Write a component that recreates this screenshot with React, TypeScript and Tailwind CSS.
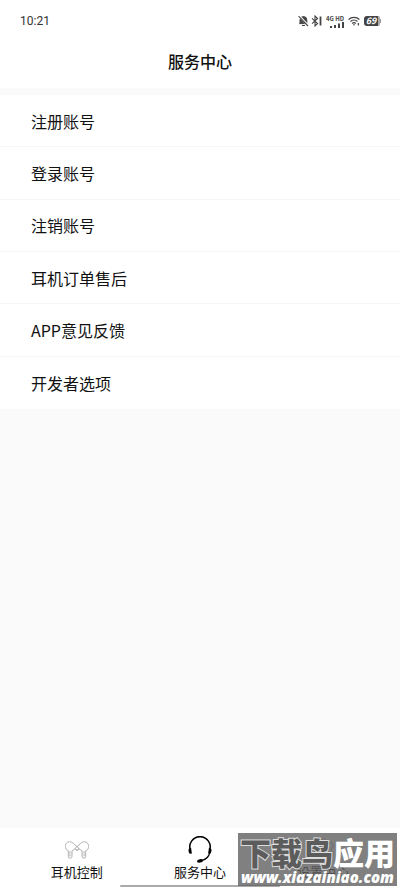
import React from "react";

const services = ["注册账号", "登录账号", "注销账号", "耳机订单售后", "APP意见反馈", "开发者选项"];

function StatusIcons() {
  return (
    <div className="flex items-center text-[#444]" aria-label="手机状态">
      <svg className="mr-[2px] h-3 w-[11px]" viewBox="0 0 11 12" fill="none" stroke="currentColor">
        <path d="M2 8.6V5a3.4 3.4 0 0 1 6.8 0v3.6H1.3M4 10.5h3" fill="currentColor" />
        <path d="M1 .8 10.5 11" stroke="white" strokeWidth="2.2" />
        <path d="M.6 1.2 10 11" strokeWidth="1.1" />
      </svg>
      <svg className="mr-1 h-3 w-[11px]" viewBox="0 0 11 12" fill="none" stroke="currentColor" strokeWidth="1.1">
        <path d="m1 3.3 5.6 5.2L4 11V1l2.6 2.5L1 8.7" />
        <path d="M9.5 1.5v9" strokeWidth="1.8" />
      </svg>
      <div className="mr-1 flex w-[18px] flex-col items-center">
        <span className="whitespace-nowrap text-[6px] leading-[7px] font-bold">4G HD</span>
        <svg className="h-[6px] w-[14px] self-end" viewBox="0 0 14 6" fill="currentColor">
          <path d="M0 4h2v2H0zM4 3h2v3H4zM8 1.5h2V6H8zM12 0h2v6h-2z" />
        </svg>
      </div>
      <svg className="mr-1 h-[10px] w-3" viewBox="0 0 12 10" fill="none" stroke="currentColor" strokeWidth="1.3">
        <path d="M.6 3.5a8 8 0 0 1 10.8 0M2.5 5.5a5.2 5.2 0 0 1 7 0M4.2 7.4a2.7 2.7 0 0 1 3.6 0" />
        <circle cx="6" cy="8.8" r=".8" fill="currentColor" stroke="none" />
        <path d="M10.4 7v2.5" />
      </svg>
      <div className="flex items-center">
        <span className="flex h-[10px] w-[14px] items-center justify-center rounded-l-[3px] bg-[#444] text-[9px] font-bold italic text-white">69</span>
        <span className="h-[10px] w-[2px] rounded-r-[2px] bg-[#aaa]" />
        <span className="h-1 w-px bg-[#999]" />
      </div>
    </div>
  );
}

function EarbudsIcon() {
  return (
    <svg className="h-[18px] w-6" viewBox="0 0 24 18" fill="none" stroke="#b0b0b0" strokeWidth="1">
      <path d="M3.300 9.700A4.600 4.600 0 1 1 8.300 2.400L14.200 7.600 12 9.500 9.800 7.800 7 10v5.300a1.850 1.850 0 0 1-3.700 0Z" />
      <path d="M20.700 9.700A4.600 4.600 0 1 0 15.700 2.400L9.800 7.600 12 9.500l2.200-1.700L17 10v5.300a1.850 1.850 0 0 0 3.700 0Z" />
      <path d="M4.500 10.500h1.400v4.500H4.500zM18.100 10.500h1.400v4.500h-1.400z" strokeWidth=".5" />
    </svg>
  );
}

function HeadsetIcon() {
  return (
    <svg className="h-[27px] w-6" viewBox="0 0 24 27" fill="none" stroke="black">
      <path d="M2.300 14A10.200 10.200 0 1 1 21.700 14" strokeWidth="1.500" />
      <path d="M21.800 16.500c-1 4.500-4 7.200-8.300 8" strokeWidth="1.200" />
      <path d="M3 11.500.7 12.900c-.5 2 .1 4 1.200 4.900l2-.2ZM21 11.500l2.300 1.400c.5 2-.1 4-1.200 4.900l-2-.2Z" fill="black" stroke="none" />
      <ellipse cx="12" cy="24.900" rx="3" ry="1.700" transform="rotate(-10 12 24.900)" fill="black" stroke="none" />
    </svg>
  );
}

function GearIcon() {
  return (
    <svg className="h-6 w-6" viewBox="0 0 24 24" fill="none" stroke="#b0b0b0" strokeWidth="1.200">
      <path d="M10 1h4l.8 3 2.700 1.500 3-.8 2 3.500L20.300 10.500v3l2.200 2.300-2 3.500-3-.8L14.800 20 14 23h-4l-.8-3-2.700-1.500-3 .8-2-3.500 2.200-2.300v-3L1.500 8.200l2-3.500 3 .8L9.200 4Z" />
      <circle cx="12" cy="12" r="4" />
    </svg>
  );
}

const tabs = [
  { name: "耳机控制", icon: <EarbudsIcon /> },
  { name: "服务中心", icon: <HeadsetIcon /> },
  { name: "设置中心", icon: <GearIcon /> },
];

export default function App() {
  return (
    <div className="flex min-h-screen flex-col bg-[#fafafa] font-['Noto_Sans_CJK_SC',sans-serif] text-[#111]">
      <header className="bg-white">
        <div className="flex h-[42px] items-center justify-between pl-5 pr-[19px]">
          <time className="font-['Roboto','Noto_Sans_CJK_SC',sans-serif] text-xs text-[#333]">10:21</time>
          <StatusIcons />
        </div>
        <h1 className="flex h-[46px] items-start justify-center pt-[7px] text-base leading-6 font-medium">服务中心</h1>
      </header>

      <main className="mt-[7px] grow">
        <ul className="grid h-[314px] grid-rows-6 divide-y divide-[#f6f6f6] bg-white">
          {services.map((name) => (
            <li key={name}>
              <button className="flex h-full w-full items-center px-[31px] text-left text-base">{name}</button>
            </li>
          ))}
        </ul>
      </main>

      <nav className="relative bg-white">
        <div className="grid h-[61px] grid-cols-3 px-[15px]">
          {tabs.map((tab) => (
            <button key={tab.name} className="flex flex-col items-center pt-2 text-[13px] leading-4">
              <span className="mb-px flex h-[27px] items-center">{tab.icon}</span>
              {tab.name}
            </button>
          ))}
        </div>
        <div className="absolute bottom-[2px] left-1/2 h-[2px] w-40 -translate-x-1/2 rounded-full bg-[#aaa]" />
        <aside className="absolute right-[3px] top-[5px] flex h-[53px] w-[159px] flex-col items-center bg-[#606060]/80 text-white">
          <p className="whitespace-nowrap text-[31px] leading-[37px] font-black">
            <span className="text-[#5c5c5c] [paint-order:stroke_fill] [-webkit-text-stroke:2px_#ddd]">下载鸟</span>应用
          </p>
          <p className="font-['Open_Sans',sans-serif] text-[15px] leading-[14px] font-extrabold italic">www.xiazainiao.com</p>
        </aside>
      </nav>
    </div>
  );
}
